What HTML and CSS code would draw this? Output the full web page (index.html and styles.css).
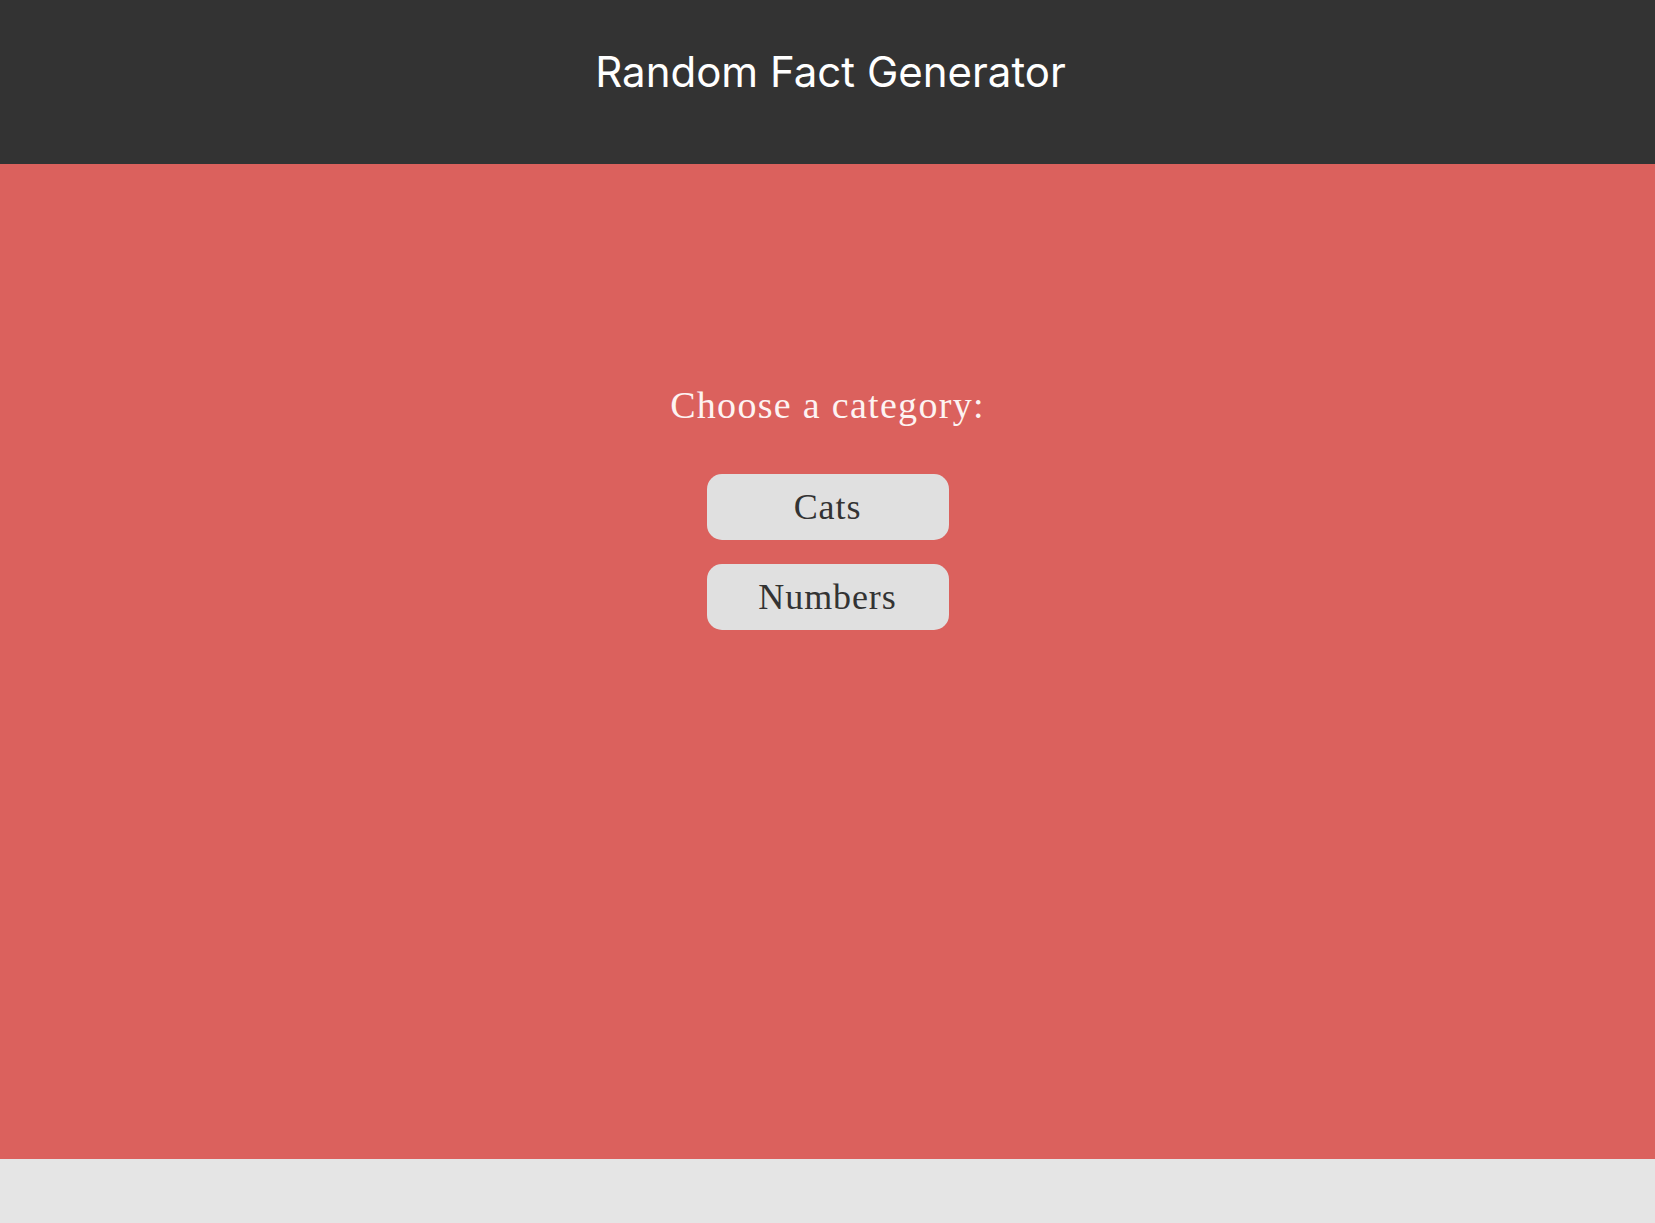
FILE: index.html
```html
<!DOCTYPE html>
<html lang="en">
<head>
<meta charset="utf-8">
<title>Random Fact Generator</title>
<link rel="stylesheet" href="styles.css">
</head>
<body>
<header class="site-header">
  <h1 class="site-title">Random Fact Generator</h1>
</header>
<main class="stage">
  <h2 class="prompt">Choose a category:</h2>
  <div class="choices">
    <button class="choice">Cats</button>
    <button class="choice">Numbers</button>
  </div>
</main>
<footer class="site-footer"></footer>
</body>
</html>
```

FILE: styles.css
```css
html, body {
  margin: 0;
  padding: 0;
}
body {
  background: #e5e5e5;
  font-family: "Liberation Serif", serif;
}
.site-header {
  box-sizing: border-box;
  height: 164px;
  padding-top: 48px;
  padding-left: 6px;
  background: #333333;
  text-align: center;
}
.site-title {
  margin: 0;
  font-family: Inter, "Noto Sans", sans-serif;
  font-weight: 400;
  font-size: 42px;
  line-height: 48px;
  color: #ffffff;
}
.stage {
  box-sizing: border-box;
  height: 995px;
  padding-top: 219px;
  background: #db615d;
  display: flex;
  flex-direction: column;
  align-items: center;
}
.prompt {
  margin: 0;
  font-family: "Liberation Serif", serif;
  font-weight: 400;
  font-size: 38px;
  line-height: 44px;
  letter-spacing: 1.3px;
  color: #fdf3f2;
}
.choices {
  margin-top: 47px;
  display: flex;
  flex-direction: column;
  gap: 24px;
}
.choice {
  width: 242px;
  height: 66px;
  padding: 0;
  border: none;
  border-radius: 15px;
  background: #e0e0e0;
  color: #333333;
  font-family: "Liberation Serif", serif;
  font-size: 36px;
  letter-spacing: 0.9px;
  line-height: 66px;
}
.site-footer {
  height: 64px;
  background: #e5e5e5;
}
```
